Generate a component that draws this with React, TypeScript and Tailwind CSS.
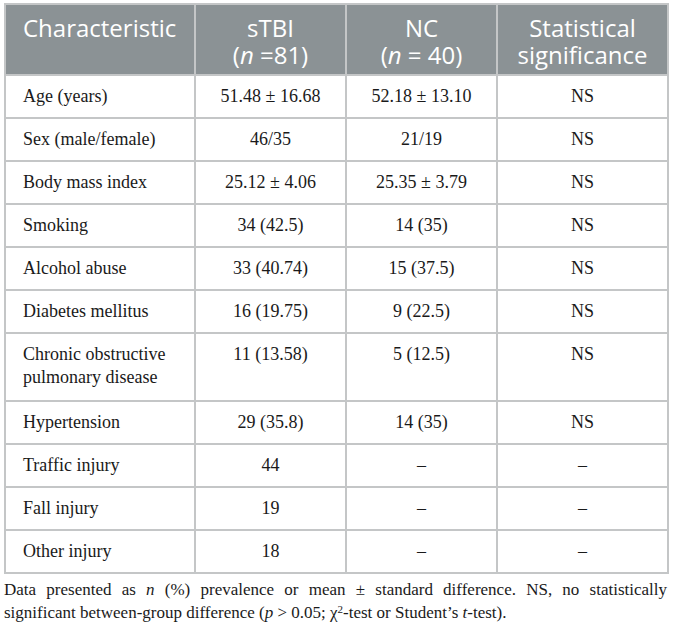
const rows: { label: string; a: string; b: string; c: string; tall?: boolean }[] = [
	{ label: "Age (years)", a: "51.48 ± 16.68", b: "52.18 ± 13.10", c: "NS" },
	{ label: "Sex (male/female)", a: "46/35", b: "21/19", c: "NS" },
	{ label: "Body mass index", a: "25.12 ± 4.06", b: "25.35 ± 3.79", c: "NS" },
	{ label: "Smoking", a: "34 (42.5)", b: "14 (35)", c: "NS" },
	{ label: "Alcohol abuse", a: "33 (40.74)", b: "15 (37.5)", c: "NS" },
	{ label: "Diabetes mellitus", a: "16 (19.75)", b: "9 (22.5)", c: "NS" },
	{ label: "Chronic obstructive pulmonary disease", a: "11 (13.58)", b: "5 (12.5)", c: "NS", tall: true },
	{ label: "Hypertension", a: "29 (35.8)", b: "14 (35)", c: "NS" },
	{ label: "Traffic injury", a: "44", b: "–", c: "–" },
	{ label: "Fall injury", a: "19", b: "–", c: "–" },
	{ label: "Other injury", a: "18", b: "–", c: "–" },
];

const App = () => {
	return (
		<div className="bg-white w-[673px] h-[630px] pt-[3px] px-[4px]">
			<table className="border-collapse w-[663px] table-fixed">
				<colgroup>
					<col className="w-[190px]" />
					<col className="w-[151px]" />
					<col className="w-[151px]" />
					<col className="w-[171px]" />
				</colgroup>
				<thead>
					<tr className="bg-[#8b9295] text-white text-[24px] leading-[27px] font-['Open_Sans',sans-serif] h-[71px]">
						<th className="border-2 border-[#c4c6c7] align-top text-left font-normal pl-[17px] pt-[9px]">
							Characteristic
						</th>
						<th className="border-2 border-[#c4c6c7] align-top text-center font-normal pt-[9px]">
							sTBI
							<br />
							(<i>n</i> =81)
						</th>
						<th className="border-2 border-[#c4c6c7] align-top text-center font-normal pt-[9px]">
							NC
							<br />
							(<i>n</i> = 40)
						</th>
						<th className="border-2 border-[#c4c6c7] align-top text-center font-normal pt-[9px]">
							Statistical
							<br />
							significance
						</th>
					</tr>
				</thead>
				<tbody className="font-['Liberation_Serif',serif] text-[18px] leading-[23px] text-[#1a1a1a]">
					{rows.map((r) => (
						<tr key={r.label} className={r.tall ? "h-[68px]" : "h-[43px]"}>
							<td className="border-2 border-[#c4c6c7] align-top pl-[17px] pr-2 pt-[9px] pb-[8px]">
								{r.label}
							</td>
							<td className="border-2 border-[#c4c6c7] align-top text-center pt-[9px]">
								{r.a}
							</td>
							<td className="border-2 border-[#c4c6c7] align-top text-center pt-[9px]">
								{r.b}
							</td>
							<td className="border-2 border-[#c4c6c7] align-top text-center pt-[9px]">
								{r.c}
							</td>
						</tr>
					))}
				</tbody>
			</table>
			<div className="w-[663px] mt-[4px] font-['Liberation_Serif',serif] text-[17px] leading-[23px] text-[#1a1a1a]">
				<p className="text-justify [text-align-last:justify]">
					Data presented as <i>n</i> (%) prevalence or mean ± standard difference. NS, no statistically
				</p>
				<p>
					significant between-group difference (<i>p</i> &gt; 0.05; χ<sup className="text-[11px] leading-none">2</sup>-test or Student’s <i>t</i>-test).
				</p>
			</div>
		</div>
	);
};

export default App;
